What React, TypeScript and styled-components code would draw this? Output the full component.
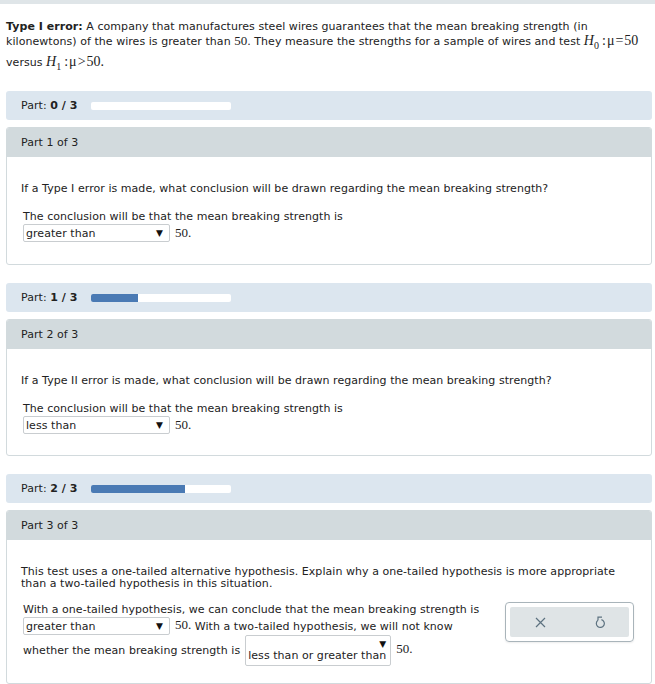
import React from "react";
import styled, { createGlobalStyle } from "styled-components";

const GlobalStyle = createGlobalStyle`
  body {
    margin: 0;
    background: #fff;
    font-family: "DejaVu Sans", Verdana, sans-serif;
    font-size: 11px;
    letter-spacing: 0.05px;
    color: #222;
  }
`;

const TopStrip = styled.div`
  height: 4px;
  background: #dfe5e8;
`;

const Page = styled.div`
  padding: 0 3px 0 6px;
`;

const Intro = styled.p`
  margin: 16px 0 0;
  line-height: 14px;
`;

const Math = styled.span`
  font-family: "Liberation Serif", "Times New Roman", serif;
  font-size: 14px;
  letter-spacing: 0;
`;

const Var = styled.i`
  font-family: "Liberation Serif", serif;
`;

const Sub = styled.sub`
  font-size: 10px;
  line-height: 0;
  vertical-align: -4px;
  margin-right: 2px;
`;

const Op = styled.span`
  margin: 0 1px;
`;

const Versus = styled.span`
  display: inline-block;
  margin-top: 6px;
`;

const ProgressRow = styled.div<{ $top: number }>`
  margin-top: ${(p) => p.$top}px;
  height: 29px;
  background: #dce6ef;
  border-radius: 3px;
  display: flex;
  align-items: center;
  padding-left: 15px;
  gap: 14px;
`;

const ProgressTrack = styled.div`
  width: 140px;
  height: 8px;
  background: #fff;
  border-radius: 2px;
  overflow: hidden;
`;

const ProgressFill = styled.div`
  height: 100%;
  background: #4a7ab4;
`;

const Card = styled.section<{ $height: number }>`
  margin-top: 7px;
  border: 1px solid #d2dadd;
  border-radius: 3px;
  height: ${(p) => p.$height}px;
  box-sizing: border-box;
  overflow: hidden;
`;

const CardHeader = styled.div`
  background: #d2dadd;
  height: 29px;
  display: flex;
  align-items: center;
  padding-left: 14px;
`;

const CardBody = styled.div`
  padding: 26px 14px 0 14px;
`;

const Question = styled.p`
  margin: 0;
  line-height: 12px;
`;

const Answer = styled.div`
  margin-top: 15px;
  padding-left: 2px;
  line-height: 13px;
`;

const Line = styled.div<{ $top?: number }>`
  display: flex;
  align-items: center;
  gap: 5px;
  margin-top: ${(p) => p.$top ?? 0}px;
  white-space: nowrap;
`;

const SelectBox = styled.span<{ $width: number; $tall?: boolean }>`
  display: inline-flex;
  align-items: ${(p) => (p.$tall ? "flex-end" : "center")};
  justify-content: space-between;
  position: relative;
  box-sizing: border-box;
  width: ${(p) => p.$width}px;
  height: ${(p) => (p.$tall ? 31 : 18)}px;
  border: 1px solid #c9cdd0;
  border-radius: 2px;
  padding: ${(p) => (p.$tall ? "0 3px 3px 2px" : "0 6px 0 2px")};
  background: #fff;
  flex-shrink: 0;
`;

const Arrow = styled.span<{ $tall?: boolean }>`
  font-size: 9px;
  color: #111;
  ${(p) => (p.$tall ? "position: absolute; right: 4px; top: 2px;" : "")}
`;

const Fifty = styled.span<{ $lift?: number }>`
  font-family: "Liberation Serif", serif;
  font-size: 13px;
  letter-spacing: 0;
  position: relative;
  top: ${(p) => -(p.$lift ?? 1)}px;
`;

const Part3Row = styled.div`
  display: flex;
  justify-content: space-between;
  align-items: flex-start;
  margin-top: 13px;
`;

const Part3Answer = styled.div`
  padding-left: 2px;
  line-height: 13px;
`;

const ButtonFrame = styled.div`
  margin-top: -1px;
  margin-right: 3px;
  border: 1px solid #a9b4ba;
  border-radius: 4px;
  padding: 4px;
  box-shadow: 0 1px 2px rgba(0, 0, 0, 0.08);
`;

const ButtonBar = styled.div`
  width: 119px;
  height: 30px;
  background: #dfe4e6;
  border-radius: 2px;
  display: flex;
  align-items: center;
  justify-content: space-around;
`;

const IconButton = styled.span`
  display: flex;
  color: #5d7280;
`;

function Select({ value, width, tall }: { value: string; width: number; tall?: boolean }) {
  return (
    <SelectBox $width={width} $tall={tall}>
      {value}
      <Arrow $tall={tall}>▼</Arrow>
    </SelectBox>
  );
}

function Progress({ done, top }: { done: number; top: number }) {
  return (
    <ProgressRow $top={top}>
      <span>
        Part: <b>{done} / 3</b>
      </span>
      <ProgressTrack>
        <ProgressFill style={{ width: `${(done / 3) * 100}%` }} />
      </ProgressTrack>
    </ProgressRow>
  );
}

export default function App() {
  return (
    <>
      <GlobalStyle />
      <TopStrip />
      <Page>
        <Intro>
          <b>Type I error:</b> A company that manufactures steel wires guarantees that the mean breaking strength (in
          <br />
          kilonewtons) of the wires is greater than <Fifty $lift={0}>50</Fifty>. They measure the strengths for a sample of
          wires and test{" "}
          <Math>
            <Var>H</Var>
            <Sub>0</Sub>
            <Op>:</Op>μ<Op>=</Op>50
          </Math>
          <br />
          <Versus>
            versus{" "}
            <Math>
              <Var>H</Var>
              <Sub>1</Sub>
              <Op>:</Op>μ<Op>&gt;</Op>50.
            </Math>
          </Versus>
        </Intro>

        <Progress done={0} top={21} />
        <Card $height={138}>
          <CardHeader>Part 1 of 3</CardHeader>
          <CardBody>
            <Question>If a Type I error is made, what conclusion will be drawn regarding the mean breaking strength?</Question>
            <Answer>
              The conclusion will be that the mean breaking strength is
              <Line $top={1}>
                <Select value="greater than" width={147} />
                <Fifty>50.</Fifty>
              </Line>
            </Answer>
          </CardBody>
        </Card>

        <Progress done={1} top={18} />
        <Card $height={137}>
          <CardHeader>Part 2 of 3</CardHeader>
          <CardBody>
            <Question>If a Type II error is made, what conclusion will be drawn regarding the mean breaking strength?</Question>
            <Answer>
              The conclusion will be that the mean breaking strength is
              <Line $top={1}>
                <Select value="less than" width={147} />
                <Fifty>50.</Fifty>
              </Line>
            </Answer>
          </CardBody>
        </Card>

        <Progress done={2} top={18} />
        <Card $height={174}>
          <CardHeader>Part 3 of 3</CardHeader>
          <CardBody>
            <Question>
              This test uses a one-tailed alternative hypothesis. Explain why a one-tailed hypothesis is more appropriate
              <br />
              than a two-tailed hypothesis in this situation.
            </Question>
            <Part3Row>
              <Part3Answer>
                With a one-tailed hypothesis, we can conclude that the mean breaking strength is
                <Line $top={1}>
                  <Select value="greater than" width={147} />
                  <span>
                    <Fifty>50.</Fifty> With a two-tailed hypothesis, we will not know
                  </span>
                </Line>
                <Line>
                  <span>whether the mean breaking strength is</span>
                  <Select value="less than or greater than" width={146} tall />
                  <Fifty $lift={2}>50.</Fifty>
                </Line>
              </Part3Answer>
              <ButtonFrame>
                <ButtonBar>
                  <IconButton>
                    <svg width="11" height="11" viewBox="0 0 11 11" fill="none" stroke="currentColor" strokeWidth="1.2">
                      <path d="M1 1l9 9M10 1l-9 9" />
                    </svg>
                  </IconButton>
                  <IconButton>
                    <svg width="10" height="14" viewBox="0 0 10 14" fill="none" stroke="currentColor" strokeWidth="1.2">
                      <path d="M7 2.2H3V5.2" />
                      <path d="M3 5.2 A4 4 0 1 0 6.4 4.6" />
                    </svg>
                  </IconButton>
                </ButtonBar>
              </ButtonFrame>
            </Part3Row>
          </CardBody>
        </Card>
      </Page>
    </>
  );
}
